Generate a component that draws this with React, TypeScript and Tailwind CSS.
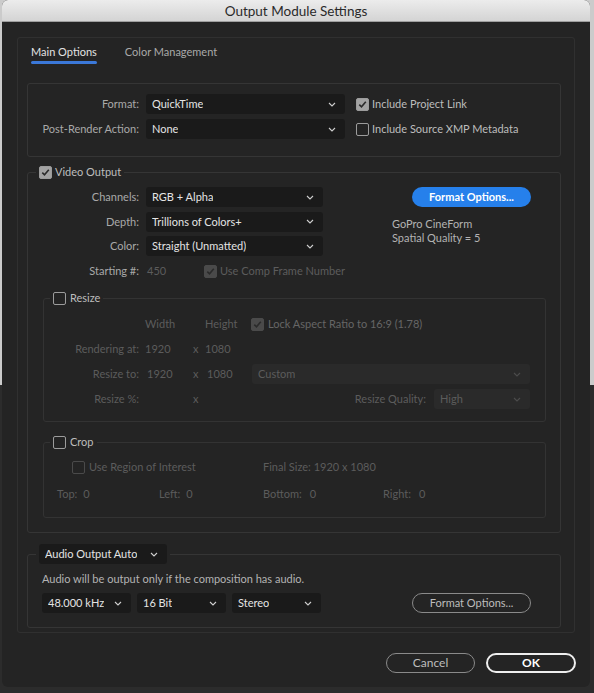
import { clsx } from "clsx";

const Chevron = ({ dim }: { dim?: boolean }) => (
  <svg width="8" height="5" viewBox="0 0 8 5" className="shrink-0">
    <path d="M1 1l3 3 3-3" fill="none" stroke={dim ? "#4c4c4c" : "#cfcfcf"} strokeWidth="1.1" />
  </svg>
);

type SelectProps = { value: string; className?: string; dim?: boolean };

const Select = ({ value, className, dim }: SelectProps) => (
  <div
    className={clsx(
      "flex h-[20px] items-center justify-between rounded-[3px] pl-[6px] pr-[9px]",
      dim ? "bg-[#2a2a2a] text-[#5c5c5c]" : "bg-[#1a1a1a] text-[#e4e4e4]",
      className
    )}
  >
    <span className="truncate">{value}</span>
    <Chevron dim={dim} />
  </div>
);

const Box = ({ checked, dim }: { checked?: boolean; dim?: boolean }) => (
  <span
    className={clsx(
      "flex size-[13px] shrink-0 items-center justify-center rounded-[2px] border-[1.5px]",
      dim ? "border-[#4a4a4a]" : "border-[#9c9c9c]",
      checked && (dim ? "bg-[#4a4a4a]" : "bg-[#a3a3a3]")
    )}
  >
    {checked && (
      <svg width="9" height="9" viewBox="0 0 9 9">
        <path d="M1.3 4.6l2.2 2.2L7.8 1.8" fill="none" stroke="#2b2b2b" strokeWidth="1.6" />
      </svg>
    )}
  </span>
);

const Label = ({ children, w }: { children?: React.ReactNode; w: string }) => (
  <span className={clsx("shrink-0 text-right", w)}>{children}</span>
);

export default function App() {
  return (
    <div className="h-[693px] w-[594px] overflow-hidden bg-[linear-gradient(to_bottom,#cbcbcb_0,#cbcbcb_385px,#2c2c2c_385px)] font-[family-name:Lato,'Liberation_Sans',sans-serif] text-[11px] leading-[16px]">
      <div className="ml-[2px] flex h-[687px] w-[588px] flex-col overflow-hidden rounded-[6px] bg-[#242424]">
        {/* title bar */}
        <div className="flex h-[22px] shrink-0 items-center justify-center border-b border-[#9f9f9f] bg-[linear-gradient(to_bottom,#ececec,#d4d4d4)] text-[13.5px] text-[#2a2a2a]">
          Output Module Settings
        </div>

        {/* tab panel */}
        <div className="ml-[15px] mt-[15px] w-[558px] rounded-[3px] border border-[#303030] pb-[4px] pl-[9px] pt-[6px]">
          <div className="ml-[4px] flex gap-[28px]">
            <div className="flex flex-col">
              <span className="text-[#e2e2e2]">Main Options</span>
              <span className="mt-[1px] h-[3px] rounded-full bg-[#3b78d8]" />
            </div>
            <span className="text-[#a9a9a9]">Color Management</span>
          </div>

          {/* format group */}
          <div className="mt-[19px] flex h-[74px] w-[534px] flex-col gap-[5px] rounded-[3px] border border-[#353535] pt-[10px]">
            <div className="flex h-[20px] items-center">
              <Label w="w-[111px] text-[#a9a9a9]">Format:</Label>
              <Select value="QuickTime" className="ml-[7px] w-[199px]" />
              <span className="ml-[11px]"><Box checked /></span>
              <span className="ml-[3px] text-[#bdbdbd]">Include Project Link</span>
            </div>
            <div className="flex h-[20px] items-center">
              <Label w="w-[111px] text-[#a9a9a9]">Post-Render Action:</Label>
              <Select value="None" className="ml-[7px] w-[199px]" />
              <span className="ml-[11px]"><Box /></span>
              <span className="ml-[3px] text-[#bdbdbd]">Include Source XMP Metadata</span>
            </div>
          </div>

          {/* video output */}
          <fieldset className="mt-[7px] w-[534px] rounded-[3px] border border-[#353535] pb-[14px]">
            <legend className="ml-[8px] px-[3px]">
              <span className="flex h-[16px] items-center gap-[3px] text-[#bdbdbd]">
                <Box checked />
                Video Output
              </span>
            </legend>
            <div className="flex pt-[7px]">
              <div className="flex w-[364px] flex-col gap-[4.7px] text-[#a9a9a9]">
                <div className="flex h-[20px] items-center">
                  <Label w="w-[111px]">Channels:</Label>
                  <Select value="RGB + Alpha" className="ml-[7px] w-[177px]" />
                </div>
                <div className="flex h-[20px] items-center">
                  <Label w="w-[111px]">Depth:</Label>
                  <Select value="Trillions of Colors+" className="ml-[7px] w-[177px]" />
                </div>
                <div className="flex h-[20px] items-center">
                  <Label w="w-[111px]">Color:</Label>
                  <Select value="Straight (Unmatted)" className="ml-[7px] w-[177px]" />
                </div>
                <div className="flex h-[20px] items-center">
                  <Label w="w-[111px]">Starting #:</Label>
                  <span className="ml-[8px] w-[49px] text-[#5c5c5c]">450</span>
                  <span className="ml-[8px]"><Box checked dim /></span>
                  <span className="ml-[3px] text-[#5c5c5c]">Use Comp Frame Number</span>
                </div>
              </div>
              <div className="flex flex-col">
                <button className="ml-[20px] flex h-[20px] w-[119px] items-center justify-center rounded-full bg-[#2680eb] font-bold text-white">
                  Format Options...
                </button>
                <div className="mt-[10px] flex flex-col leading-[14px] text-[#b3b3b3]">
                  <span>GoPro CineForm</span>
                  <span>Spatial Quality = 5</span>
                </div>
              </div>
            </div>

            {/* resize */}
            <fieldset className="ml-[15px] mt-[9px] w-[503px] rounded-[3px] border border-[#333333] pb-[12px]">
              <legend className="ml-[6px] px-[3px]">
                <span className="flex h-[16px] items-center gap-[4px] text-[#bdbdbd]">
                  <Box />
                  Resize
                </span>
              </legend>
              <div className="flex flex-col gap-[5px] pt-[8px] text-[#5c5c5c]">
                <div className="flex h-[20px] items-center">
                  <Label w="w-[95px]" />
                  <span className="ml-[6px] w-[48px]">Width</span>
                  <span className="w-[12px]" />
                  <span className="w-[46px]">Height</span>
                  <Box checked dim />
                  <span className="ml-[4px] text-[#666666]">Lock Aspect Ratio to 16:9 (1.78)</span>
                </div>
                <div className="flex h-[20px] items-center">
                  <Label w="w-[95px]">Rendering at:</Label>
                  <span className="ml-[6px] w-[48px]">1920</span>
                  <span className="w-[12px]">x</span>
                  <span className="w-[46px]">1080</span>
                </div>
                <div className="flex h-[20px] items-center">
                  <Label w="w-[95px]">Resize to:</Label>
                  <span className="ml-[6px] w-[48px] pl-[2px]">1920</span>
                  <span className="w-[12px]">x</span>
                  <span className="w-[46px] pl-[2px]">1080</span>
                  <Select dim value="Custom" className="ml-[1px] w-[278px]" />
                </div>
                <div className="flex h-[20px] items-center">
                  <Label w="w-[95px]">Resize %:</Label>
                  <span className="ml-[6px] w-[48px]" />
                  <span className="w-[12px]">x</span>
                  <span className="w-[46px]" />
                  <Label w="w-[175px]">Resize Quality:</Label>
                  <Select dim value="High" className="ml-[8px] w-[96px]" />
                </div>
              </div>
            </fieldset>

            {/* crop */}
            <fieldset className="ml-[15px] mt-[12px] w-[503px] rounded-[3px] border border-[#333333] pb-[13px]">
              <legend className="ml-[6px] px-[3px]">
                <span className="flex h-[16px] items-center gap-[4px] text-[#bdbdbd]">
                  <Box />
                  Crop
                </span>
              </legend>
              <div className="flex flex-col gap-[7px] pt-[7px] text-[#5c5c5c]">
                <div className="flex h-[20px] items-center pl-[28px]">
                  <Box dim />
                  <span className="ml-[4px] w-[174px]">Use Region of Interest</span>
                  <span>Final Size: 1920 x 1080</span>
                </div>
                <div className="flex h-[20px] items-center pl-[13px]">
                  <span className="flex w-[102px] gap-[6px]"><span>Top:</span><span>0</span></span>
                  <span className="flex w-[104px] gap-[6px]"><span>Left:</span><span>0</span></span>
                  <span className="flex w-[120px] gap-[8px]"><span>Bottom:</span><span>0</span></span>
                  <span className="flex gap-[8px]"><span>Right:</span><span>0</span></span>
                </div>
              </div>
            </fieldset>
          </fieldset>

          {/* audio */}
          <fieldset className="mt-[11px] w-[534px] rounded-[3px] border border-[#353535] pb-[14px]">
            <legend className="ml-[8px] px-[3px]">
              <Select value="Audio Output Auto" className="w-[128px]" />
            </legend>
            <div className="pl-[14px] pt-[7px]">
              <p className="text-[#b3b3b3]">Audio will be output only if the composition has audio.</p>
              <div className="mt-[6px] flex items-center gap-[6px]">
                <Select value="48.000 kHz" className="w-[89px]" />
                <Select value="16 Bit" className="w-[89px]" />
                <Select value="Stereo" className="w-[89px]" />
                <button className="ml-[85px] flex h-[20px] w-[119px] items-center justify-center rounded-full border-[1.5px] border-[#8a8a8a] text-[#bdbdbd]">
                  Format Options...
                </button>
              </div>
            </div>
          </fieldset>
        </div>

        {/* footer buttons */}
        <div className="mt-[20px] flex justify-end gap-[11px] pr-[14px]">
          <button className="flex h-[20px] w-[89px] items-center justify-center rounded-full border-[1.5px] border-[#8a8a8a] text-[12px] text-[#bdbdbd]">
            Cancel
          </button>
          <button className="flex h-[20px] w-[90px] items-center justify-center rounded-full border-2 border-[#eeeeee] text-[12px] font-bold text-white">
            OK
          </button>
        </div>
      </div>
    </div>
  );
}
